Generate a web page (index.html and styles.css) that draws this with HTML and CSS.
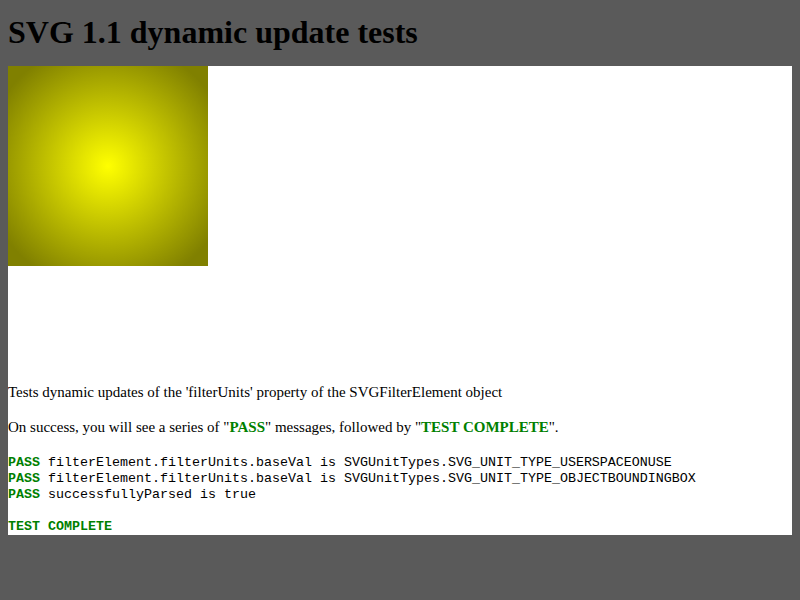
FILE: index.html
```html
<!DOCTYPE html>
<html>
<head>
<meta charset="utf-8">
<link rel="stylesheet" href="styles.css">
</head>
<body>
<h1 class="title">SVG 1.1 dynamic update tests</h1>
<div class="sheet">
  <div class="canvas">
    <svg class="square" width="200" height="200" viewBox="0 0 200 200">
      <defs>
        <radialGradient id="g" cx="100" cy="100" r="125" gradientUnits="userSpaceOnUse">
          <stop offset="0" stop-color="#ffff00"/>
          <stop offset="1" stop-color="#808000"/>
        </radialGradient>
      </defs>
      <rect x="0" y="0" width="200" height="200" fill="url(#g)"/>
    </svg>
  </div>
  <p class="desc">Tests dynamic updates of the 'filterUnits' property of the SVGFilterElement object</p>
  <p class="desc last">On success, you will see a series of "<span class="pass">PASS</span>" messages, followed by "<span class="pass">TEST COMPLETE</span>".</p>
  <div class="console"><span class="pass">PASS</span> filterElement.filterUnits.baseVal is SVGUnitTypes.SVG_UNIT_TYPE_USERSPACEONUSE<br><span class="pass">PASS</span> filterElement.filterUnits.baseVal is SVGUnitTypes.SVG_UNIT_TYPE_OBJECTBOUNDINGBOX<br><span class="pass">PASS</span> successfullyParsed is true<br><br><span class="pass">TEST COMPLETE</span></div>
</div>
</body>
</html>
```
FILE: styles.css
```css
html {
  background: #5a5a5a;
}
body {
  margin: 8px;
  font-family: "Liberation Serif", "Times New Roman", serif;
  font-size: 16px;
  color: #000;
}
.title {
  font-size: 32px;
  font-weight: bold;
  margin: 0;
  padding: 6px 0 0;
  height: 52px;
  line-height: 37px;
}
.sheet {
  background: #fff;
  padding: 0;
}
.canvas {
  height: 317px;
}
.square {
  display: block;
}
.desc {
  margin: 0 0 16px;
  line-height: 19px;
  font-size: 15px;
}
.desc.last {
  margin-bottom: 18px;
}
.console {
  font-family: "Liberation Mono", "Courier New", monospace;
  font-size: 13.33px;
  line-height: 16px;
}
.pass {
  color: #008000;
  font-weight: bold;
}
```
